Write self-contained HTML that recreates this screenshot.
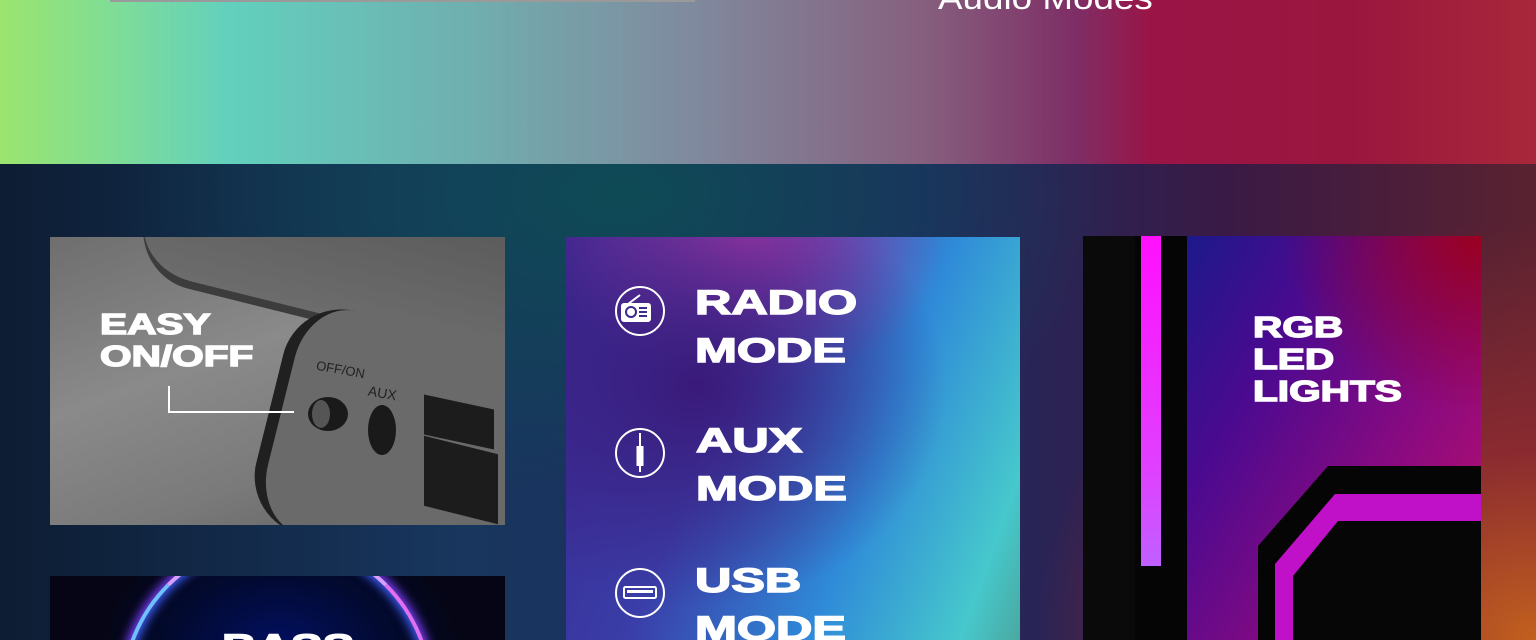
<!DOCTYPE html>
<html><head><meta charset="utf-8"><style>
*{margin:0;padding:0;box-sizing:border-box}
html,body{width:1536px;height:640px;overflow:hidden}
body{position:relative;font-family:"Liberation Sans",sans-serif;background:#0f2440}
.top{position:absolute;left:0;top:0;width:1536px;height:164px;
background:linear-gradient(90deg,#9be56e 0%,#7ddc9a 8%,#62d0bd 15%,#6fb0b0 30%,#808a9e 45%,#86607e 60%,#7e2e66 70%,#9a1446 75%,#9b163e 88%,#a8283a 100%)}
.bottom{position:absolute;left:0;top:164px;width:1536px;height:476px;
background:radial-gradient(ellipse 500px 300px at 620px 30px,#0e4a55 0%,rgba(14,74,85,0) 100%),
radial-gradient(ellipse 500px 420px at 1536px 476px,#c2601e 0%,#8a2a30 45%,rgba(90,30,50,0) 100%),
linear-gradient(90deg,#0d1d33 0%,#18365e 30%,#1f2a60 60%,#3a1a45 80%,#5a2230 100%)}
.big{position:absolute;color:#fff;font-weight:bold;transform-origin:0 0;white-space:nowrap;-webkit-text-stroke:1.4px #fff}
.p1{position:absolute;left:50px;top:237px;width:455px;height:288px;overflow:hidden;
background:linear-gradient(160deg,#6e6e6e 0%,#8a8a8a 40%,#7a7a7a 70%,#5e5e5e 100%)}
.p2{position:absolute;left:566px;top:237px;width:454px;height:403px;overflow:hidden;
background:radial-gradient(ellipse 250px 220px at 130px 150px,#3a1a7a 0%,rgba(58,26,122,0) 100%),
radial-gradient(ellipse 200px 150px at 180px 0px,#a03aa8 0%,rgba(160,58,168,0) 100%),
linear-gradient(110deg,#3a2890 0%,#3a3ea8 35%,#2f8ad8 65%,#46c8cc 90%,#4aa8a0 100%)}
.p3{position:absolute;left:1083px;top:236px;width:398px;height:404px;overflow:hidden;
background:radial-gradient(ellipse 200px 180px at 398px 0px,#9a0020 0%,rgba(154,0,32,0) 100%),
linear-gradient(120deg,#1a1a8a 15%,#4a0a90 40%,#8a0a80 70%,#c0106a 100%)}
.p4{position:absolute;left:50px;top:576px;width:455px;height:64px;overflow:hidden;
background:radial-gradient(ellipse 180px 120px at 230px 70px,#021060 0%,#020a30 60%,#050515 100%)}
</style></head><body>
<div class="top"></div>
<div style="position:absolute;left:110px;top:0;width:585px;height:2px;background:#9a9a9a"></div>
<div style="position:absolute;left:938px;top:-20px;font-size:32px;color:#fff;transform-origin:0 0;transform:scaleX(1.15);white-space:nowrap">Audio Modes</div>
<div class="bottom"></div>

<div class="p1">
 <div style="position:absolute;left:90px;top:-40px;width:500px;height:140px;border-radius:60px;transform:rotate(14deg);background:linear-gradient(180deg,#5a5a5a,#6c6c6c);border-bottom:8px solid #3c3c3c"></div>
 <div style="position:absolute;left:215px;top:95px;width:320px;height:230px;border-radius:60px 0 0 60px;transform:rotate(14deg);background:#6a6a6a;border-left:12px solid #202020"></div>
 <div style="position:absolute;left:258px;top:160px;width:40px;height:34px;border-radius:50%;background:#1a1a1a"></div>
 <div style="position:absolute;left:262px;top:163px;width:18px;height:28px;border-radius:50%;background:#555"></div>
 <div style="position:absolute;left:318px;top:168px;width:28px;height:50px;border-radius:50%;background:#1a1a1a"></div>
 <div style="position:absolute;left:266px;top:125px;color:#222;font-size:13px;transform:rotate(10deg)">OFF/ON</div>
 <div style="position:absolute;left:318px;top:148px;color:#222;font-size:14px;transform:rotate(10deg)">AUX</div>
 <div style="position:absolute;left:374px;top:165px;width:70px;height:40px;background:#1c1c1c;transform:skewY(12deg)"></div>
 <div style="position:absolute;left:374px;top:208px;width:74px;height:70px;background:#1c1c1c;transform:skewY(14deg)"></div>
 <div style="position:absolute;left:118px;top:149px;width:2px;height:27px;background:#fff"></div>
 <div style="position:absolute;left:118px;top:174px;width:126px;height:2px;background:#fff"></div>
 <div class="big" style="left:50px;top:72px;font-size:29px;line-height:32px;transform:scaleX(1.4)">EASY<br>ON/OFF</div>
</div>

<div class="p2">
 <svg style="position:absolute;left:48px;top:48px" width="52" height="52" viewBox="0 0 52 52" fill="none" stroke="#fff" stroke-width="2">
  <circle cx="26" cy="26" r="24"/><rect x="8" y="19" width="28" height="17" rx="2" fill="#fff"/>
  <line x1="14" y1="19" x2="26" y2="10"/><circle cx="17" cy="27" r="5" stroke="#3a2a90" stroke-width="2"/>
  <line x1="25" y1="23" x2="33" y2="23" stroke="#3a2a90"/><line x1="25" y1="27" x2="33" y2="27" stroke="#3a2a90"/><line x1="25" y1="31" x2="33" y2="31" stroke="#3a2a90"/>
 </svg>
 <svg style="position:absolute;left:48px;top:190px" width="52" height="52" viewBox="0 0 52 52" fill="none" stroke="#fff" stroke-width="2">
  <circle cx="26" cy="26" r="24"/><line x1="26" y1="6" x2="26" y2="20"/><rect x="23.5" y="20" width="5" height="18" fill="#fff"/><line x1="26" y1="38" x2="26" y2="45"/>
 </svg>
 <svg style="position:absolute;left:48px;top:330px" width="52" height="52" viewBox="0 0 52 52" fill="none" stroke="#fff" stroke-width="2">
  <circle cx="26" cy="26" r="24"/><rect x="10" y="20" width="32" height="11" rx="1.5"/><rect x="13" y="23" width="26" height="3" fill="#fff" stroke="none"/>
 </svg>
 <div class="big" style="left:129px;top:42px;font-size:34px;line-height:48px;transform:scaleX(1.48)">RADIO<br>MODE</div>
 <div class="big" style="left:130px;top:180px;font-size:34px;line-height:48px;transform:scaleX(1.48)">AUX<br>MODE</div>
 <div class="big" style="left:129px;top:320px;font-size:34px;line-height:48px;transform:scaleX(1.48)">USB<br>MODE</div>
</div>

<div class="p3">
 <div style="position:absolute;left:0;top:0;width:52px;height:404px;background:#0a0a0a"></div>
 <div style="position:absolute;left:52px;top:0;width:52px;height:404px;background:#050505"></div>
 <div style="position:absolute;left:58px;top:0;width:20px;height:330px;background:linear-gradient(180deg,#ff10ff,#e040ff 70%,#c060ff)"></div>
 <div style="position:absolute;left:175px;top:230px;width:240px;height:200px;background:#050505;clip-path:polygon(70px 0,100% 0,100% 100%,0 100%,0 80px)"></div>
 <div style="position:absolute;left:192px;top:258px;width:220px;height:170px;background:#c010c8;clip-path:polygon(60px 0,100% 0,100% 100%,0 100%,0 70px)"></div>
 <div style="position:absolute;left:210px;top:285px;width:200px;height:140px;background:#060606;clip-path:polygon(45px 0,100% 0,100% 100%,0 100%,0 55px)"></div>
 <div class="big" style="left:170px;top:76px;font-size:29px;line-height:32px;transform:scaleX(1.4)">RGB<br>LED<br>LIGHTS</div>
</div>

<div class="p4">
 <div style="position:absolute;left:71px;top:-38px;width:312px;height:312px;border-radius:50%;border:4px solid #d8a0ff;box-shadow:0 0 10px 3px #8040ff,inset 0 0 10px 3px #4060ff;border-left-color:#70c0ff;border-right-color:#e070f0"></div>
 <div class="big" style="left:172px;top:52px;font-size:34px;transform:scaleX(1.4)">BASS</div>
</div>
</body></html>
